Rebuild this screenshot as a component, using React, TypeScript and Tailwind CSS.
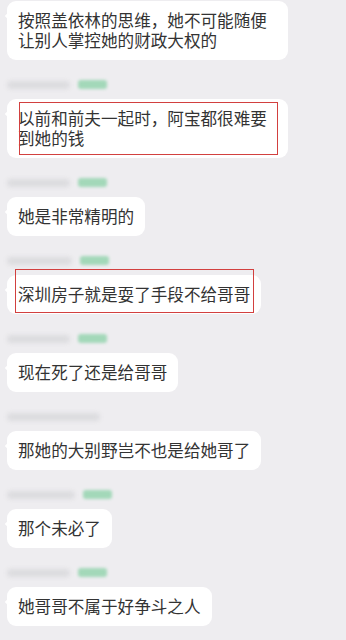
type Msg = {
  text: string;
  name?: string;
  tag?: boolean;
  box?: string;
};

const messages: Msg[] = [
  { text: '按照盖依林的思维，她不可能随便让别人掌控她的财政大权的' },
  {
    name: 'w-[63px]',
    tag: true,
    text: '以前和前夫一起时，阿宝都很难要到她的钱',
    box: 'left-[11.5px] top-[3px] h-[53px] w-[259px]',
  },
  { name: 'w-[63px]', tag: true, text: '她是非常精明的' },
  {
    name: 'w-[65px]',
    tag: true,
    text: '深圳房子就是耍了手段不给哥哥',
    box: 'left-[7.5px] top-[-6px] h-[44px] w-[239px]',
  },
  { name: 'w-[63px]', tag: true, text: '现在死了还是给哥哥' },
  { name: 'w-[93px]', tag: false, text: '那她的大别野岂不也是给她哥了' },
  { name: 'w-[68px]', tag: true, text: '那个未必了' },
  { name: 'w-[63px]', tag: true, text: '她哥哥不属于好争斗之人' },
];

const NameRow = ({ width, tag }: { width: string; tag?: boolean }) => (
  <div className="mt-[18.5px] flex h-3 items-center gap-[8px]">
    <div className={`h-[8px] rounded-full bg-[#dcdcdf] blur-[2px] ${width}`} />
    {tag && <div className="h-[9px] w-[29px] rounded-[3px] bg-[#a3d8b9] blur-[1.5px]" />}
  </div>
);

const Bubble = ({ text, box }: { text: string; box?: string }) => (
  <div className="relative max-w-[281px] rounded-[9px] bg-white px-[11px] py-[9.75px] text-[16.6px] leading-[20px] text-[#333333]">
    <div className="absolute left-[-1px] top-[12px] h-[6px] w-[6px] rotate-45 bg-white" />
    <span className="relative">{text}</span>
    {box && <div className={`absolute border-[1.5px] border-[#d2403f] ${box}`} />}
  </div>
);

export default function App() {
  return (
    <div
      className="flex h-[640px] w-[346px] flex-col items-start overflow-hidden bg-[#eeedf0] px-[7px] pt-[0.5px]"
      style={{ fontFamily: '"Noto Sans CJK SC", "Noto Sans", sans-serif' }}
    >
      {messages.map((m, i) => (
        <div key={i} className="flex flex-col items-start">
          {m.name && <NameRow width={m.name} tag={m.tag} />}
          <div className={m.name ? 'mt-[8px]' : ''}>
            <Bubble text={m.text} box={m.box} />
          </div>
        </div>
      ))}
    </div>
  );
}
